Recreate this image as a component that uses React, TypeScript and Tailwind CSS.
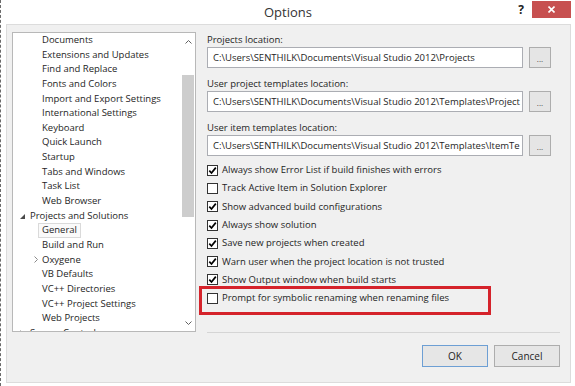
import React from "react";

type TreeItem = { label: string; kind: "child" | "top"; expander?: "open" | "closed"; selected?: boolean };

const tree: TreeItem[] = [
  { label: "Documents", kind: "child" },
  { label: "Extensions and Updates", kind: "child" },
  { label: "Find and Replace", kind: "child" },
  { label: "Fonts and Colors", kind: "child" },
  { label: "Import and Export Settings", kind: "child" },
  { label: "International Settings", kind: "child" },
  { label: "Keyboard", kind: "child" },
  { label: "Quick Launch", kind: "child" },
  { label: "Startup", kind: "child" },
  { label: "Tabs and Windows", kind: "child" },
  { label: "Task List", kind: "child" },
  { label: "Web Browser", kind: "child" },
  { label: "Projects and Solutions", kind: "top", expander: "open" },
  { label: "General", kind: "child", selected: true },
  { label: "Build and Run", kind: "child" },
  { label: "Oxygene", kind: "child", expander: "closed" },
  { label: "VB Defaults", kind: "child" },
  { label: "VC++ Directories", kind: "child" },
  { label: "VC++ Project Settings", kind: "child" },
  { label: "Web Projects", kind: "child" },
  { label: "Source Control", kind: "top", expander: "closed" },
];

const checks: { label: string; checked: boolean; highlight?: boolean }[] = [
  { label: "Always show Error List if build finishes with errors", checked: true },
  { label: "Track Active Item in Solution Explorer", checked: false },
  { label: "Show advanced build configurations", checked: true },
  { label: "Always show solution", checked: true },
  { label: "Save new projects when created", checked: true },
  { label: "Warn user when the project location is not trusted", checked: true },
  { label: "Show Output window when build starts", checked: true },
  { label: "Prompt for symbolic renaming when renaming files", checked: false, highlight: true },
];

const paths = [
  { label: "Projects location:", value: "C:\\Users\\SENTHILK\\Documents\\Visual Studio 2012\\Projects" },
  { label: "User project templates location:", value: "C:\\Users\\SENTHILK\\Documents\\Visual Studio 2012\\Templates\\Project" },
  { label: "User item templates location:", value: "C:\\Users\\SENTHILK\\Documents\\Visual Studio 2012\\Templates\\ItemTe" },
];

function TreeRow({ item }: { item: TreeItem }) {
  if (item.kind === "top") {
    return (
      <div className="h-[14.65px] leading-[14.65px] flex items-center pl-[7px] whitespace-nowrap">
        <span className="w-[10px] flex items-center">
          {item.expander === "open" ? (
            <svg width="5" height="5" viewBox="0 0 5 5">
              <polygon points="5,0 5,5 0,5" fill="#4a4a4a" />
            </svg>
          ) : (
            <svg width="4" height="7" viewBox="0 0 4 7">
              <path d="M0.5 0.5 L3.5 3.5 L0.5 6.5" stroke="#8a8a8a" fill="none" strokeWidth="1" />
            </svg>
          )}
        </span>
        <span>{item.label}</span>
      </div>
    );
  }
  return (
    <div className="h-[14.65px] leading-[14.65px] flex items-center pl-[21px] whitespace-nowrap">
      <span className="w-[8px] flex items-center">
        {item.expander === "closed" && (
          <svg width="4" height="7" viewBox="0 0 4 7">
            <path d="M0.5 0.5 L3.5 3.5 L0.5 6.5" stroke="#8a8a8a" fill="none" strokeWidth="1" />
          </svg>
        )}
      </span>
      {item.selected ? (
        <span className="inline-block h-[14.65px] leading-[12.65px] border border-[#dadada] bg-[#fafafa] px-[3px] -ml-[4px]">
          {item.label}
        </span>
      ) : (
        <span>{item.label}</span>
      )}
    </div>
  );
}

function CheckRow({ label, checked, highlight }: { label: string; checked: boolean; highlight?: boolean }) {
  return (
    <div className="relative h-[18.3px] flex items-center whitespace-nowrap">
      <span className="w-[11px] h-[11px] border border-[#333333] bg-white mr-[4px] flex items-center justify-center shrink-0">
        {checked && (
          <svg width="9" height="9" viewBox="0 0 9 9">
            <path d="M1.3 4.6 L3.5 7 L7.8 1.6" stroke="#000" strokeWidth="1.7" fill="none" />
          </svg>
        )}
      </span>
      <span>{label}</span>
      {highlight && (
        <div className="absolute left-[-8px] top-[-3px] w-[292px] h-[29px] border-[3px] border-[#d5232b]" />
      )}
    </div>
  );
}

export default function App() {
  return (
    <div className="w-[575px] h-[386px] bg-white border-l border-dashed border-[#6a6a6a] flex flex-col overflow-hidden text-[#1e1e1e] font-['Open_Sans',sans-serif] text-[9.5px]">
      {/* Title bar */}
      <div className="h-[24px] grid grid-cols-[1fr_auto_1fr] shrink-0">
        <div />
        <div className="pt-[3px] text-[13px] leading-[18px] text-[#333333]">Options</div>
        <div className="flex justify-end items-start pr-[4px]">
          <span className="mt-[3px] mr-[8px] text-[12px] leading-[14px] font-bold text-[#222]">?</span>
          <div className="mt-[1px] w-[39px] h-[17px] bg-[#c75050] flex items-center justify-center">
            <svg width="7" height="7" viewBox="0 0 7 7">
              <path d="M0.5 0.5 L6.5 6.5 M6.5 0.5 L0.5 6.5" stroke="#fff" strokeWidth="1.6" />
            </svg>
          </div>
        </div>
      </div>

      {/* Frame */}
      <div className="ml-[5px] w-[565px] h-[359px] border border-[#dcdcdc] bg-[#f0f0f0] flex pl-[5px] pt-[7px] gap-[11px]">
        {/* Tree */}
        <div className="w-[184px] h-[300px] border border-[#b8b8b8] bg-white flex overflow-hidden">
          <div className="flex-1 overflow-hidden">
            {tree.map((t) => (
              <TreeRow key={t.label} item={t} />
            ))}
          </div>
          <div className="w-[13px] flex flex-col bg-white">
            <div className="h-[17px] flex items-center justify-center">
              <svg width="7" height="4" viewBox="0 0 7 4">
                <path d="M0.5 3.5 L3.5 0.5 L6.5 3.5" stroke="#606060" fill="none" strokeWidth="1" />
              </svg>
            </div>
            <div className="flex-1 pt-[25px]">
              <div className="h-[142px] mr-[1px] bg-[#cdcdcd]" />
            </div>
            <div className="h-[17px] flex items-center justify-center">
              <svg width="7" height="4" viewBox="0 0 7 4">
                <path d="M0.5 0.5 L3.5 3.5 L6.5 0.5" stroke="#606060" fill="none" strokeWidth="1" />
              </svg>
            </div>
          </div>
        </div>

        {/* Right panel */}
        <div className="w-[353px] flex flex-col">
          <div className="flex flex-col gap-[8px]">
            {paths.map((p) => (
              <div key={p.label} className="flex flex-col">
                <div className="h-[15px] leading-[15px] whitespace-nowrap">{p.label}</div>
                <div className="h-[21px] flex items-center gap-[6px]">
                  <div className="w-[316px] h-[21px] border border-[#abadb3] bg-white pl-[5px] leading-[19px] overflow-hidden whitespace-nowrap">
                    {p.value}
                  </div>
                  <div className="w-[22px] h-[21px] border border-[#adadad] bg-[#e5e5e5] flex items-center justify-center text-[8px] leading-[8px] text-[#444] pt-[2px]">
                    ...
                  </div>
                </div>
              </div>
            ))}
          </div>

          <div className="mt-[5px] flex flex-col">
            {checks.map((c) => (
              <CheckRow key={c.label} label={c.label} checked={c.checked} highlight={c.highlight} />
            ))}
          </div>

          <div className="mt-[25px] h-px bg-[#d5d5d5]" />

          <div className="mt-[12px] flex justify-end gap-[6px]">
            <div className="w-[66px] h-[22px] border border-[#6d9fd4] bg-[#e6e6e6] flex items-center justify-center text-[10px]">
              OK
            </div>
            <div className="w-[66px] h-[22px] border border-[#adadad] bg-[#e6e6e6] flex items-center justify-center text-[10px]">
              Cancel
            </div>
          </div>
        </div>
      </div>
    </div>
  );
}
